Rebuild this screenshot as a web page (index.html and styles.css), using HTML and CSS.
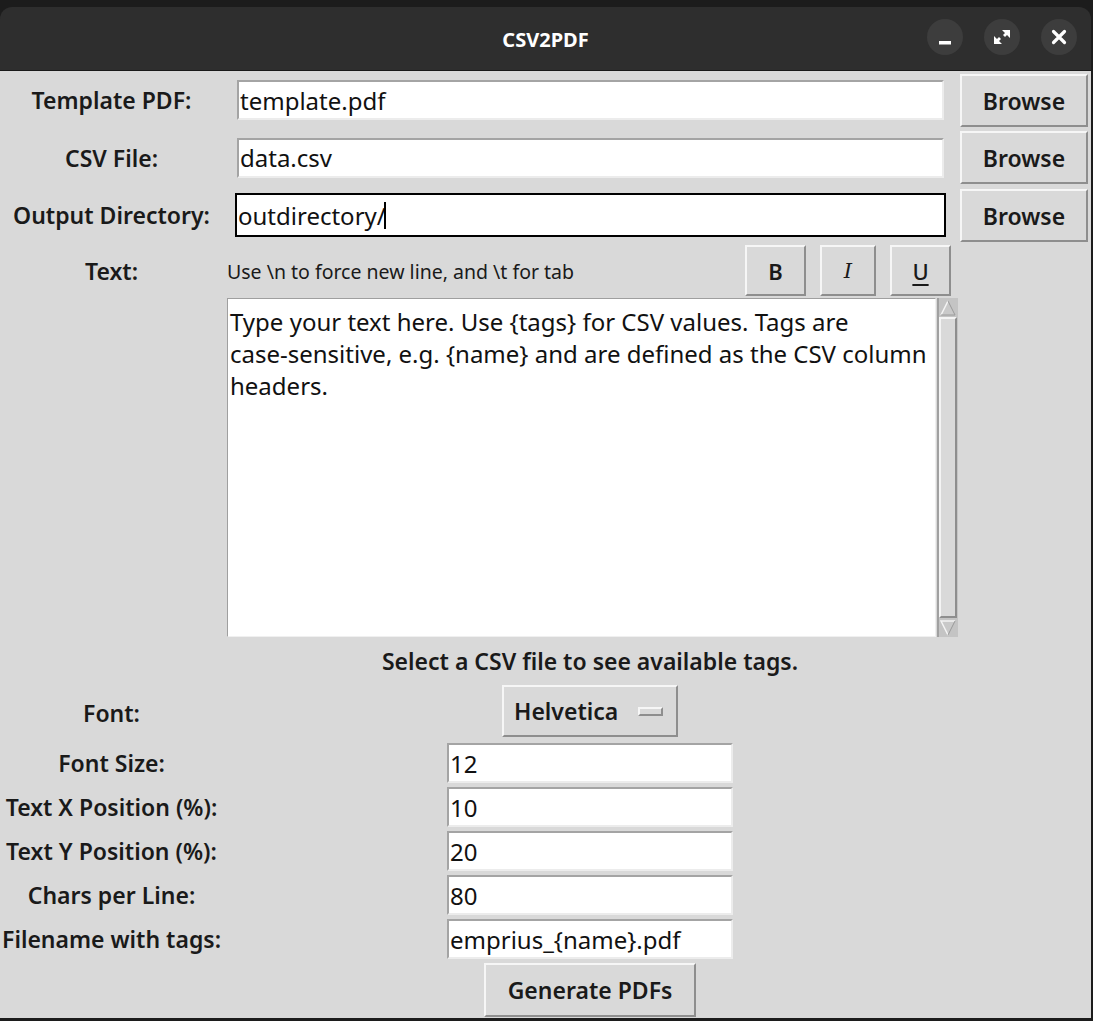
FILE: index.html
```html
<!DOCTYPE html>
<html>
<head>
<meta charset="utf-8">
<title>CSV2PDF</title>
<link rel="stylesheet" href="styles.css">
</head>
<body>
<div class="window">
  <div class="titlebar">
    <span class="title">CSV2PDF</span>
    <div class="controls">
      <div class="ctl">
        <svg width="36" height="36" viewBox="0 0 36 36"><rect x="12" y="22" width="12" height="3.5" fill="#fff"/></svg>
      </div>
      <div class="ctl">
        <svg width="36" height="36" viewBox="0 0 36 36"><path d="M18 11 H26 V19 L23 16 L21 18 L19 16 L21 14 Z" fill="#fff"/><path d="M10 17 L13 20 L15 18 L17 20 L15 22 L18 25 H10 Z" fill="#fff"/></svg>
      </div>
      <div class="ctl">
        <svg width="36" height="36" viewBox="0 0 36 36"><path d="M12.5 12.5 L23.5 23.5 M23.5 12.5 L12.5 23.5" stroke="#fff" stroke-width="3.2" stroke-linecap="round"/></svg>
      </div>
    </div>
  </div>
  <div class="content">
    <div class="form">
      <div class="label r1">Template PDF:</div>
      <div class="cell r1"><div class="entry wide">template.pdf</div></div>
      <div class="cell r1 c2"><div class="btn browse">Browse</div></div>

      <div class="label r2">CSV File:</div>
      <div class="cell r2"><div class="entry wide">data.csv</div></div>
      <div class="cell r2 c2"><div class="btn browse">Browse</div></div>

      <div class="label r3">Output Directory:</div>
      <div class="cell r3"><div class="entry wide focus">outdirectory/<span class="caret"></span></div></div>
      <div class="cell r3 c2"><div class="btn browse">Browse</div></div>

      <div class="label r4">Text:</div>
      <div class="cell r4 textbar">
        <span class="hint">Use \n to force new line, and \t for tab</span>
        <div class="fmt">
          <div class="btn fbtn b">B</div>
          <div class="btn fbtn i">I</div>
          <div class="btn fbtn u">U</div>
        </div>
      </div>

      <div class="cell r5 textwrap">
        <div class="textarea">Type your text here. Use {tags} for CSV values. Tags are<br>case-sensitive, e.g. {name} and are defined as the CSV column<br>headers.</div>
        <div class="scrollbar">
          <div class="sb-arrow">
            <svg width="18" height="18" viewBox="0 0 18 18"><polygon points="9,2 16,16 2,16" fill="#c9c9c9"/><polyline points="2,16 9,2" fill="none" stroke="#f4f4f4" stroke-width="1.5"/><polyline points="9,2 16,16 2,16" fill="none" stroke="#9a9a9a" stroke-width="1"/></svg>
          </div>
          <div class="sb-slider"></div>
          <div class="sb-arrow">
            <svg width="18" height="18" viewBox="0 0 18 18"><polygon points="2,2 16,2 9,16" fill="#c9c9c9"/><polyline points="9,16 2,2 16,2" fill="none" stroke="#f4f4f4" stroke-width="1.5"/><polyline points="16,2 9,16" fill="none" stroke="#9a9a9a" stroke-width="1"/></svg>
          </div>
        </div>
      </div>

      <div class="cell r6 center"><span class="tags">Select a CSV file to see available tags.</span></div>

      <div class="label r7">Font:</div>
      <div class="cell r7 center top"><div class="btn option">Helvetica<span class="indicator"></span></div></div>

      <div class="label r8">Font Size:</div>
      <div class="cell r8 center"><div class="entry small">12</div></div>

      <div class="label r9">Text X Position (%):</div>
      <div class="cell r9 center"><div class="entry small">10</div></div>

      <div class="label r10">Text Y Position (%):</div>
      <div class="cell r10 center"><div class="entry small">20</div></div>

      <div class="label r11">Chars per Line:</div>
      <div class="cell r11 center"><div class="entry small">80</div></div>

      <div class="label r12">Filename with tags:</div>
      <div class="cell r12 center"><div class="entry small">emprius_{name}.pdf</div></div>

      <div class="cell r13 center top"><div class="btn generate">Generate PDFs</div></div>
    </div>
  </div>
</div>
</body>
</html>
```

FILE: styles.css
```css
* { box-sizing: border-box; }

body {
  margin: 0;
  width: 1093px;
  height: 1021px;
  overflow: hidden;
  background: #1c1c1c;
  font-family: "Noto Sans", "Open Sans", sans-serif;
  color: #1a1a1a;
}

.window {
  margin-top: 7px;
  width: 1091px;
  border-radius: 12px 12px 0 0;
  overflow: hidden;
}

.titlebar {
  position: relative;
  height: 64px;
  background: #2e2e2e;
  border-bottom: 1px solid #1a1a1a;
  display: flex;
  align-items: center;
  justify-content: center;
  padding-top: 2px;
}

.title {
  color: #ffffff;
  font-weight: 700;
  font-size: 20px;
}

.controls {
  position: absolute;
  right: 14px;
  top: 12px;
  display: flex;
  gap: 21px;
}

.ctl {
  width: 36px;
  height: 36px;
  border-radius: 50%;
  background: #3d3d3d;
}

.ctl svg { display: block; }

.content {
  background: #d9d9d9;
  height: 947px;
}

.form {
  display: grid;
  grid-template-columns: 226px 728px 137px;
  grid-template-rows: 58px 57px 58px 54px 339px 48px 56px 44px 44px 44px 44px 44px 57px;
}

.label {
  grid-column: 1;
  display: flex;
  align-items: center;
  justify-content: center;
  padding-right: 3px;
  font-size: 23px;
  font-weight: 600;
  white-space: nowrap;
}

.cell {
  grid-column: 2;
  display: flex;
  align-items: center;
  min-width: 0;
}

.cell.c2 { grid-column: 3; }
.cell.center { justify-content: center; }
.cell.top { align-items: flex-start; }

.r1 { grid-row: 1; }
.r2 { grid-row: 2; }
.r3 { grid-row: 3; }
.r4 { grid-row: 4; }
.r5 { grid-row: 5; }
.r6 { grid-row: 6; }
.r7 { grid-row: 7; }
.r8 { grid-row: 8; }
.r9 { grid-row: 9; }
.r10 { grid-row: 10; }
.r11 { grid-row: 11; }
.r12 { grid-row: 12; }
.r13 { grid-row: 13; }

.entry {
  height: 40px;
  background: #ffffff;
  border: 2px solid;
  border-color: #a4a4a4 #ececec #ececec #a4a4a4;
  font-size: 24px;
  padding-left: 1px;
  display: flex;
  align-items: center;
  white-space: nowrap;
  color: #111;
}

.entry.wide {
  width: 707px;
  margin-left: 11px;
}

.entry.focus {
  height: 44px;
  width: 711px;
  margin-left: 9px;
  border-color: #000;
  padding-left: 1px;
}

.caret {
  display: inline-block;
  width: 2px;
  height: 27px;
  background: #000;
  margin-left: -2px;
}

.entry.small {
  width: 286px;
  padding-left: 1px;
}

.btn {
  background: #d9d9d9;
  border: 2px solid;
  border-color: #f6f6f6 #8e8e8e #8e8e8e #f6f6f6;
  display: flex;
  align-items: center;
  justify-content: center;
  font-size: 23px;
  font-weight: 600;
  white-space: nowrap;
}

.browse {
  width: 128px;
  height: 53px;
  margin-left: 6px;
  padding-top: 1px;
}

.textbar {
  justify-content: space-between;
  align-items: center;
  padding-left: 1px;
}

.hint {
  font-size: 19.5px;
  padding-top: 1px;
}

.fmt {
  display: flex;
  gap: 14px;
  align-self: flex-start;
  margin-top: 1px;
  margin-right: 3px;
}

.fbtn {
  height: 51px;
  width: 61px;
  font-size: 22px;
}

.fbtn.i {
  width: 56px;
  font-style: italic;
  font-family: "DejaVu Serif", serif;
  font-weight: 400;
  font-size: 21px;
}

.fbtn.u { text-decoration: underline; text-underline-offset: 4px; font-weight: 500; }

.textwrap {
  align-items: stretch;
  width: 731px;
  margin-left: 1px;
}

.textarea {
  width: 710px;
  background: #fff;
  border: 1px solid;
  border-color: #9f9f9f #f0f0f0 #f0f0f0 #9f9f9f;
  font-size: 24px;
  line-height: 32px;
  padding: 7px 2px;
  white-space: nowrap;
  color: #111;
  overflow: hidden;
}

.scrollbar {
  width: 21px;
  margin-left: 1px;
  background: #c4c4c4;
  border-left: 2px solid #a0a0a0;
  display: flex;
  flex-direction: column;
  padding-right: 1px;
}

.sb-arrow {
  height: 19px;
  display: flex;
  align-items: center;
  justify-content: center;
}

.sb-arrow svg { display: block; }

.sb-slider {
  flex: 1;
  background: #d9d9d9;
  border: 2px solid;
  border-color: #f4f4f4 #8e8e8e #8e8e8e #f4f4f4;
}

.tags {
  font-size: 23px;
  font-weight: 600;
}

.option {
  width: 176px;
  height: 52px;
  justify-content: flex-start;
  padding-left: 10px;
}

.indicator {
  display: inline-block;
  width: 25px;
  height: 9px;
  margin-left: 20px;
  border: 2px solid;
  border-color: #f6f6f6 #8e8e8e #8e8e8e #f6f6f6;
  background: #d9d9d9;
}

.generate {
  margin-top: 2px;
  width: 212px;
  height: 54px;
}
```
